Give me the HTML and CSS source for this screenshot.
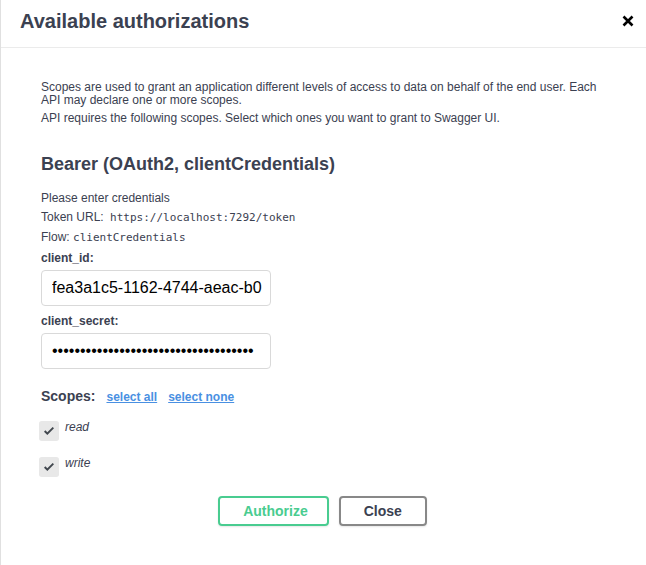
FILE: index.html
```html
<!DOCTYPE html>
<html>
<head>
<meta charset="utf-8">
<link rel="stylesheet" href="styles.css">
</head>
<body>
<div class="modal">
  <div class="modal-header">
    <h3 class="modal-title">Available authorizations</h3>
    <button class="close-btn" aria-label="Close">
      <svg width="12" height="12" viewBox="0 0 12 12"><path d="M1.5 1.5 L10.5 10.5 M10.5 1.5 L1.5 10.5" stroke="#000" stroke-width="2.6" stroke-linecap="butt"/></svg>
    </button>
  </div>
  <div class="modal-content">
    <div class="auth-container">
      <div class="scopes-desc">
        <p class="desc">Scopes are used to grant an application different levels of access to data on behalf of the end user. Each API may declare one or more scopes.</p>
        <p class="desc">API requires the following scopes. Select which ones you want to grant to Swagger UI.</p>
      </div>
      <h4 class="auth-title">Bearer (OAuth2, clientCredentials)</h4>
      <p class="info">Please enter credentials</p>
      <p class="info">Token URL: <code class="mono url">https://localhost:7292/token</code></p>
      <p class="info">Flow: <code class="mono">clientCredentials</code></p>
      <div class="field">
        <label class="field-label">client_id:</label>
        <input class="text-input" type="text" value="fea3a1c5-1162-4744-aeac-b0">
      </div>
      <div class="field">
        <label class="field-label">client_secret:</label>
        <input class="text-input secret" type="password" value="xxxxxxxxxxxxxxxxxxxxxxxxxxxxxxxxxxxx">
      </div>
      <div class="scopes">
        <div class="scopes-head">
          <span class="scopes-label">Scopes:</span>
          <a class="link" href="#">select all</a>
          <a class="link" href="#">select none</a>
        </div>
        <div class="scope-item">
          <span class="check"><svg width="10" height="8" viewBox="3 7 10 8"><path fill="#41474E" d="M6.333 15L3 11.667l1.333-1.334 2 2L11.667 7 13 8.333z"/></svg></span>
          <span class="scope-name">read</span>
        </div>
        <div class="scope-item">
          <span class="check"><svg width="10" height="8" viewBox="3 7 10 8"><path fill="#41474E" d="M6.333 15L3 11.667l1.333-1.334 2 2L11.667 7 13 8.333z"/></svg></span>
          <span class="scope-name">write</span>
        </div>
      </div>
      <div class="btn-row">
        <button class="btn authorize">Authorize</button>
        <button class="btn close">Close</button>
      </div>
    </div>
  </div>
</div>
</body>
</html>
```
FILE: styles.css
```css
html, body {
  margin: 0;
  padding: 0;
  background: #fff;
}
body {
  font-family: "Liberation Sans", Arial, sans-serif;
  color: #3b4151;
}
.modal {
  width: 646px;
  height: 565px;
  border-left: 1px solid #e0e0e0;
  box-sizing: border-box;
}
.modal-header {
  display: flex;
  align-items: center;
  height: 47px;
  border-bottom: 1px solid #ebebeb;
}
.modal-title {
  flex: 1;
  margin: 0;
  padding: 0 0 0 19px;
  font-size: 20px;
  font-weight: 700;
  color: #3b4151;
  position: relative;
  top: -2px;
}
.close-btn {
  border: none;
  background: none;
  padding: 0;
  margin: 0 12px 5px 0;
  width: 12px;
  height: 12px;
  display: flex;
}
.modal-content {
  padding: 20px;
}
.auth-container {
  padding: 10px 20px;
}
.scopes-desc {
  padding-top: 3px;
}
.desc {
  margin: 0 0 5px;
  font-size: 12px;
  line-height: 13px;
}
.auth-title {
  margin: 29px 0 16px;
  font-size: 18px;
  font-weight: 700;
  color: #3b4151;
}
.info {
  margin: 0 0 5px;
  font-size: 12px;
  line-height: 14px;
}
.mono {
  font-family: "DejaVu Sans Mono", "Liberation Mono", monospace;
  font-size: 11px;
}
.url {
  margin-left: 3px;
}
.field {
  display: flex;
  flex-direction: column;
  align-items: flex-start;
}
.field-label {
  font-size: 12px;
  font-weight: 700;
  margin: 1px 0 0;
  line-height: 14px;
}
.text-input {
  box-sizing: border-box;
  width: 230px;
  height: 36px;
  margin: 5px 0 7px;
  padding: 8px 2px 8px 10px;
  border: 1px solid #d9d9d9;
  border-radius: 4px;
  font-family: "Liberation Sans", Arial, sans-serif;
  font-size: 16px;
  color: #000;
  background: #fff;
}
.secret {
  font-size: 16px;
}
.scopes {
  margin-top: 12px;
}
.scopes-head {
  display: flex;
  align-items: baseline;
  gap: 11px;
}
.scopes-label {
  font-size: 14px;
  font-weight: 700;
}
.link {
  font-size: 12px;
  font-weight: 700;
  color: #4990e2;
  text-decoration: underline;
}
.scope-item {
  display: flex;
  align-items: flex-start;
  margin-top: 16px;
}
.scope-item + .scope-item {
  margin-top: 17px;
}
.check {
  width: 16px;
  height: 16px;
  margin: 3px 8px 0 0;
  border-radius: 1px;
  background: #e8e8e8;
  box-shadow: 0 0 0 2px #e8e8e8;
  display: flex;
  align-items: center;
  justify-content: center;
}
.scope-name {
  font-size: 12px;
  font-style: italic;
  line-height: 14px;
}
.btn-row {
  display: flex;
  justify-content: center;
  gap: 10px;
  margin-top: 21px;
  margin-left: -21px;
  margin-right: -19px;
}
.btn {
  font-family: "Liberation Sans", Arial, sans-serif;
  font-size: 14px;
  font-weight: 700;
  padding: 5px 23px;
  border: 2px solid #888;
  border-radius: 4px;
  background: transparent;
  color: #3b4151;
  box-shadow: 0 1px 2px rgba(0,0,0,.1);
  line-height: 16px;
}
.btn.authorize {
  padding: 5px 19px 5px 23px;
  border-color: #49cc90;
  color: #49cc90;
}
```
